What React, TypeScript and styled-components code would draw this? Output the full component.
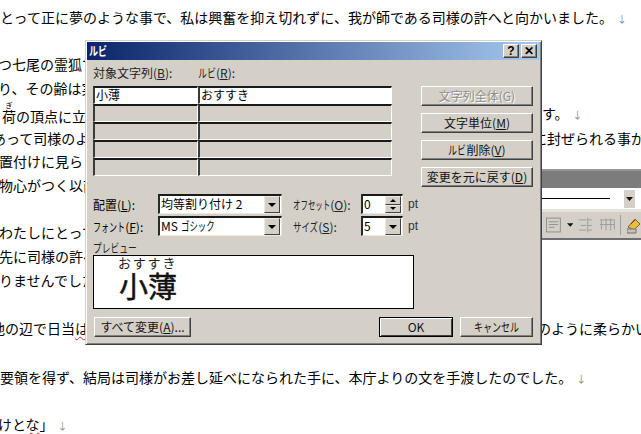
import React from "react";
import styled, { createGlobalStyle } from "styled-components";

const Global = createGlobalStyle`
  html, body { margin: 0; padding: 0; width: 641px; height: 434px; overflow: hidden; background: #fff; }
  body { font-family: "Noto Sans CJK JP", "Liberation Sans", sans-serif; color: #000; }
`;

const Page = styled.div`
  position: relative;
  width: 641px;
  height: 434px;
  overflow: hidden;
  background: #fff;
`;

const Doc = styled.div`
  display: flex;
  flex-direction: column;
  padding-top: 5px;
`;

const Line = styled.div<{ $h: number }>`
  height: ${(p) => p.$h}px;
  line-height: 24px;
  font-size: 14px;
  white-space: nowrap;
  display: flex;
  justify-content: space-between;
  overflow: hidden;
  rt { font-size: 7px; line-height: 5px; }
`;

const LeftPart = styled.span<{ $x: number }>`
  margin-left: ${(p) => p.$x}px;
`;

const RightPart = styled.span<{ $w: number }>`
  display: block;
  width: ${(p) => p.$w}px;
  flex: none;
  overflow: hidden;
`;

const Mark = styled.span`
  color: #8a8a8a;
  font-size: 10px;
  margin-left: 4px;
`;

const Wavy = styled.span`
  text-decoration: underline wavy #d02020 1px;
  text-underline-offset: 2px;
`;

const Narrow = styled.span<{ $n: number; $r?: number }>`
  display: inline-block;
  width: ${(p) => p.$n * 12 * (p.$r ?? 0.72)}px;
  transform: scaleX(${(p) => p.$r ?? 0.72});
  transform-origin: left center;
  white-space: nowrap;
  text-align: left;
`;

const ToolWindow = styled.div`
  position: absolute;
  left: 536px;
  top: 169px;
  width: 105px;
  height: 71px;
  background: #d4d0c8;
  border-bottom: 2px solid #6f6f6f;
  display: flex;
  flex-direction: column;
  box-sizing: border-box;
`;

const ToolTitle = styled.div`
  height: 19px;
  flex: none;
  box-sizing: border-box;
  background: #7c7c7c;
  border-top: 2px solid #969696;
`;

const ToolField = styled.div`
  height: 21px;
  flex: none;
  background: #fff;
  display: flex;
  align-items: center;
  padding-left: 6px;
  border-bottom: 3px solid #e6e3dc;
`;

const FieldRule = styled.div`
  width: 68px;
  height: 1px;
  background: #000;
`;

const FieldArrow = styled.div`
  width: 11px;
  height: 18px;
  margin-left: 14px;
  background: #d4d0c8;
  display: flex;
  align-items: center;
  justify-content: center;
`;

const ToolIcons = styled.div`
  flex: 1;
  display: flex;
  align-items: center;
  padding-left: 10px;
`;

const IconGap = styled.span<{ $w: number }>`
  width: ${(p) => p.$w}px;
  flex: none;
`;

const ToolSep = styled.div`
  width: 1px;
  height: 20px;
  flex: none;
  background: #a0a0a0;
  margin: 0 6px 0 5px;
`;

const Dialog = styled.div`
  position: absolute;
  left: 85px;
  top: 40px;
  width: 457px;
  height: 305px;
  box-sizing: border-box;
  background: #d4d0c8;
  border: 1px solid;
  border-color: #d4d0c8 #404040 #404040 #d4d0c8;
  box-shadow: inset 1px 1px 0 #fff, inset -1px -1px 0 #808080;
  padding: 1px;
  display: flex;
  flex-direction: column;
  font-size: 12px;
`;

const TitleBar = styled.div`
  height: 18px;
  flex: none;
  background: linear-gradient(90deg, #0a246a 0%, #a6caf0 100%);
  display: flex;
  align-items: center;
  padding: 0 3px 0 2px;
  color: #fff;
  font-weight: 700;
  font-size: 12px;
`;

const TitleText = styled.span`
  flex: 1;
  line-height: 18px;
`;

const CapButton = styled.div<{ $mr?: number }>`
  width: 16px;
  height: 14px;
  box-sizing: border-box;
  background: #d4d0c8;
  border: 1px solid;
  border-color: #fff #404040 #404040 #fff;
  box-shadow: inset -1px -1px 0 #808080;
  margin-right: ${(p) => p.$mr ?? 0}px;
  display: flex;
  align-items: center;
  justify-content: center;
  color: #000;
  font: 700 12px/12px "Liberation Sans", sans-serif;
`;

const Body = styled.div`
  flex: 1;
  display: flex;
  flex-direction: column;
  padding-left: 6px;
`;

const Top = styled.div`
  display: flex;
  height: 116px;
`;

const TableBlock = styled.div`
  width: 299px;
  display: flex;
  flex-direction: column;
`;

const TableHead = styled.div`
  height: 26px;
  display: grid;
  grid-template-columns: 105px 1fr;
  align-items: center;
  color: #222;
  padding-bottom: 2px;
  box-sizing: border-box;
`;

const Cells = styled.div`
  display: grid;
  grid-template-columns: 105px 194px;
  grid-auto-rows: 18px;
`;

const Cell = styled.div<{ $on?: boolean }>`
  box-sizing: border-box;
  background: ${(p) => (p.$on ? "#fff" : "#d4d0c8")};
  border-style: solid;
  border-width: 2px 1px 1px 2px;
  border-color: #1a1a1a #fff #fff #3a3a3a;
  font-size: 12px;
  line-height: 14px;
  padding-left: 1px;
  overflow: hidden;
  white-space: nowrap;
`;

const SideButtons = styled.div`
  margin-left: 29px;
  padding-top: 26px;
  width: 112px;
  display: flex;
  flex-direction: column;
  gap: 7px;
`;

const Btn = styled.div<{ $off?: boolean; $w?: number; $def?: boolean }>`
  width: ${(p) => (p.$w ? `${p.$w}px` : "100%")};
  height: 20px;
  box-sizing: border-box;
  background: #d4d0c8;
  border: 1px solid;
  border-color: ${(p) => (p.$def ? "#000" : "#fff #404040 #404040 #fff")};
  box-shadow: ${(p) =>
    p.$def
      ? "inset 1px 1px 0 #fff, inset -1px -1px 0 #404040"
      : "inset -1px -1px 0 #808080"};
  display: flex;
  align-items: center;
  justify-content: center;
  font-size: 12px;
  line-height: 18px;
  white-space: nowrap;
  color: ${(p) => (p.$off ? "#8f8d87" : "#111")};
  text-shadow: ${(p) => (p.$off ? "1px 1px 0 #fff" : "none")};
`;

const Form = styled.div`
  margin-top: 18px;
  display: grid;
  grid-template-columns: 65px 124px 79px 42px auto;
  grid-template-rows: 20px 20px;
  row-gap: 2px;
  align-items: center;
  justify-items: start;
  height: 42px;
  white-space: nowrap;
`;

const OptLabel = styled.span`
  padding-left: 11px;
  color: #222;
`;

const Unit = styled.span`
  margin-left: 5px;
  color: #333;
  font: 12px "Liberation Sans", sans-serif;
`;

const Sunken = styled.div<{ $w: number }>`
  width: ${(p) => p.$w}px;
  height: 20px;
  box-sizing: border-box;
  background: #fff;
  border-style: solid;
  border-width: 2px 1px 1px 2px;
  border-color: #1a1a1a #eeeae2 #eeeae2 #2a2a2a;
  display: flex;
  align-items: stretch;
  justify-content: space-between;
  font-size: 12px;
  line-height: 15px;
  padding: 0 1px;
`;

const DropBtn = styled.div`
  width: 16px;
  box-sizing: border-box;
  background: #d4d0c8;
  border: 1px solid;
  border-color: #eeeae2 #404040 #404040 #eeeae2;
  display: flex;
  align-items: center;
  justify-content: center;
`;

const SpinCol = styled.div`
  width: 16px;
  display: flex;
  flex-direction: column;
`;

const SpinBtn = styled(DropBtn)`
  flex: 1;
`;

const DownTri = styled.div`
  width: 0;
  height: 0;
  border: 4px solid transparent;
  border-bottom: 0;
  border-top-color: #000;
`;

const SmallTri = styled.div<{ $up?: boolean }>`
  width: 0;
  height: 0;
  border: 3px solid transparent;
  ${(p) =>
    p.$up
      ? "border-top: 0; border-bottom-color: #000;"
      : "border-bottom: 0; border-top-color: #000;"}
`;

const PreviewLabel = styled.div`
  margin-top: 4px;
  height: 15px;
  line-height: 15px;
  font-size: 12px;
  color: #222;
`;

const Preview = styled.div`
  width: 321px;
  height: 54px;
  box-sizing: border-box;
  background: #fff;
  border: 1px solid #000;
  padding-left: 24px;
  display: flex;
  flex-direction: column;
`;

const PreviewRuby = styled.div`
  font-size: 13px;
  line-height: 14px;
  letter-spacing: 1.8px;
  height: 14px;
  color: #222;
`;

const PreviewBase = styled.div`
  font-size: 29px;
  line-height: 30px;
  margin-left: 1px;
  color: #111;
  -webkit-text-stroke: 0.5px #111;
`;

const Bottom = styled.div`
  margin-top: 8px;
  display: flex;
  padding-left: 1px;
`;

const BottomRight = styled.div`
  margin-left: auto;
  margin-right: 7px;
  display: flex;
  gap: 7px;
`;

const lines: { h: number; x?: number; left: React.ReactNode; right?: React.ReactNode; rw?: number }[] = [
  { h: 47, left: <>とって正に夢のような事で、私は興奮を抑え切れずに、我が師である司様の許へと向かいました。<Mark>↓</Mark></> },
  { h: 24, x: -2, left: "つ七尾の霊狐で" },
  { h: 25, x: -2, left: "り、その齢は実" },
  { h: 25, x: 2, left: <><ruby>荷<rt>ぎ</rt></ruby>の頂点に立つ</>, right: <>す。<Mark>↓</Mark></>, rw: 99 },
  { h: 23, x: -8, left: "あって司様のよう", right: "に封ぜられる事が", rw: 108 },
  { h: 24, x: -1, left: "置付けに見ら" },
  { h: 47, x: -1, left: "物心がつく以前" },
  { h: 24, x: -1, left: "わたしにとって" },
  { h: 24, x: -1, left: "先に司様の許へ" },
  { h: 48, x: -1, left: "りませんでした" },
  { h: 49, x: -9, left: <>地の辺で日当<Wavy>は</Wavy></>, right: "のように柔らかい", rw: 104 },
  { h: 47, left: <>要領を得ず、結局は司様がお差し延べになられた手に、本庁よりの文を手渡したのでした。<Mark>↓</Mark></> },
  { h: 24, x: -2, left: <>けと<Wavy>な</Wavy>」<Mark>↓</Mark></> },
];

const grid = [
  ["小薄", "おすすき"],
  ["", ""],
  ["", ""],
  ["", ""],
  ["", ""],
];

const ListIcon = () => (
  <svg width="16" height="16" viewBox="0 0 16 16" fill="none" stroke="#8c8c8c">
    <rect x="0.5" y="0.5" width="15" height="15" />
    <path d="M3 4.500h10M3 7.500h10M3 10.500h6" />
  </svg>
);

const SmallArrow = () => (
  <svg width="7" height="4" viewBox="0 0 7 4" fill="#111">
    <path d="M0 0h7L3.500 4z" />
  </svg>
);

const ColsIcon = () => (
  <svg width="15" height="16" viewBox="0 0 15 16" fill="none" stroke="#9a9a9a">
    <path d="M1 2.500h8M3 8.500h6M1 13.500h8M11 2.500h4M11 8.500h4M11 13.500h4M10.500 0v16" />
  </svg>
);

const RowsIcon = () => (
  <svg width="16" height="16" viewBox="0 0 16 16" fill="none" stroke="#9a9a9a">
    <path d="M0 2.500h16M0 7.500h16M1.500 3v10M6.500 1v13M11.500 1v13M15.500 3v10" />
  </svg>
);

const PenIcon = () => (
  <svg width="14" height="18" viewBox="0 0 14 18" style={{ flex: "none" }}>
    <path d="M1 11L8 3l5 5-6 6z" fill="#e8c040" stroke="#806020" />
    <path d="M0 13h9v4H0z" fill="#c8c4bc" stroke="#707070" />
    <path d="M4 8l4-4" stroke="#a03010" />
  </svg>
);

export default function App() {
  return (
    <Page>
      <Global />
      <Doc>
        {lines.map((l, i) => (
          <Line key={i} $h={l.h}>
            <LeftPart $x={l.x ?? 0}>{l.left}</LeftPart>
            {l.right ? <RightPart $w={l.rw ?? 100}>{l.right}</RightPart> : null}
          </Line>
        ))}
      </Doc>

      <ToolWindow>
        <ToolTitle />
        <ToolField>
          <FieldRule />
          <FieldArrow>
            <SmallArrow />
          </FieldArrow>
        </ToolField>
        <ToolIcons>
          <ListIcon />
          <IconGap $w={6} />
          <SmallArrow />
          <IconGap $w={5} />
          <ColsIcon />
          <IconGap $w={8} />
          <RowsIcon />
          <ToolSep />
          <PenIcon />
        </ToolIcons>
      </ToolWindow>

      <Dialog>
        <TitleBar>
          <TitleText><Narrow $n={2} $r={0.75}>ルビ</Narrow></TitleText>
          <CapButton $mr={2}>?</CapButton>
          <CapButton>✕</CapButton>
        </TitleBar>
        <Body>
          <Top>
            <TableBlock>
              <TableHead>
                <span>対象文字列(<u>B</u>):</span>
                <span><Narrow $n={2} $r={0.75}>ルビ</Narrow>(<u>R</u>):</span>
              </TableHead>
              <Cells>
                {grid.flatMap((r, i) => [
                  <Cell key={`a${i}`} $on={i === 0}>{r[0]}</Cell>,
                  <Cell key={`b${i}`} $on={i === 0}>{r[1]}</Cell>,
                ])}
              </Cells>
            </TableBlock>
            <SideButtons>
              <Btn $off>文字列全体(G)</Btn>
              <Btn>文字単位(<u>M</u>)</Btn>
              <Btn><Narrow $n={2} $r={0.75}>ルビ</Narrow>削除(<u>V</u>)</Btn>
              <Btn>変更を元に戻す(<u>D</u>)</Btn>
            </SideButtons>
          </Top>
          <Form>
            <span>配置(<u>L</u>):</span>
            <Sunken $w={124}>
              <span>均等割り付け 2</span>
              <DropBtn><DownTri /></DropBtn>
            </Sunken>
            <OptLabel><Narrow $n={5} $r={0.62}>オフセット</Narrow>(<u>O</u>):</OptLabel>
            <Sunken $w={42}>
              <span>0</span>
              <SpinCol>
                <SpinBtn><SmallTri $up /></SpinBtn>
                <SpinBtn><SmallTri /></SpinBtn>
              </SpinCol>
            </Sunken>
            <Unit>pt</Unit>
            <span><Narrow $n={4} $r={0.67}>フォント</Narrow>(<u>F</u>):</span>
            <Sunken $w={124}>
              <span>MS <Narrow $n={4} $r={0.7}>ゴシック</Narrow></span>
              <DropBtn><DownTri /></DropBtn>
            </Sunken>
            <OptLabel><Narrow $n={3} $r={0.7}>サイズ</Narrow>(<u>S</u>):</OptLabel>
            <Sunken $w={42}>
              <span>5</span>
              <DropBtn><DownTri /></DropBtn>
            </Sunken>
            <Unit>pt</Unit>
          </Form>
          <PreviewLabel><Narrow $n={5} $r={0.73}>プレビュー</Narrow></PreviewLabel>
          <Preview>
            <PreviewRuby>おすすき</PreviewRuby>
            <PreviewBase>小薄</PreviewBase>
          </Preview>
          <Bottom>
            <Btn $w={97}>すべて変更(<u>A</u>)...</Btn>
            <BottomRight>
              <Btn $w={74} $def>OK</Btn>
              <Btn $w={73}><Narrow $n={5} $r={0.75}>キャンセル</Narrow></Btn>
            </BottomRight>
          </Bottom>
        </Body>
      </Dialog>
    </Page>
  );
}
